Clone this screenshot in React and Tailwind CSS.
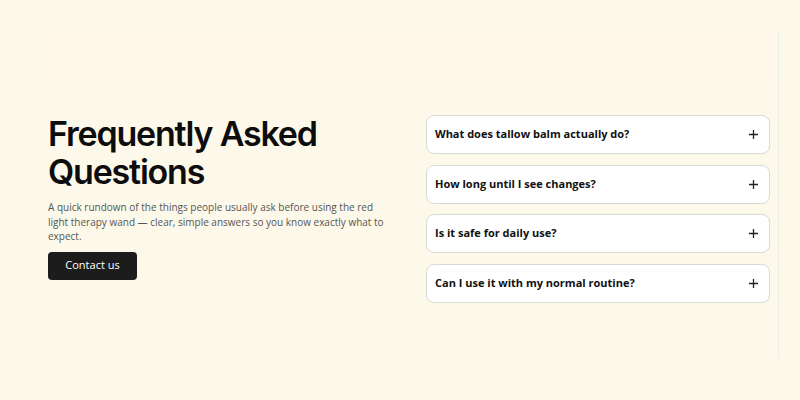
import React from "react";

const faqs = [
  "What does tallow balm actually do?",
  "How long until I see changes?",
  "Is it safe for daily use?",
  "Can I use it with my normal routine?",
];

function Plus() {
  return (
    <svg width="11" height="11" viewBox="0 0 11 11" className="shrink-0">
      <path d="M5.5 1v9M1 5.5h9" stroke="#222" strokeWidth="1.3" />
    </svg>
  );
}

export default function App() {
  return (
    <div className="w-[800px] h-[400px] bg-[#fdf9ea] pt-[31px] overflow-hidden">
      <div className="ml-[41px] w-[738px] h-[327px] border-r border-[#eeeee6] flex flex-col">
        <div className="h-[50px] bg-[#fff8eb]" />
        <div className="flex">
          <div className="w-[385px] pl-[7px] pt-[34px]">
            <h1
              className="text-[34px] leading-[38px] font-semibold text-[#0d0d0d] tracking-[-1.2px]"
              style={{ fontFamily: "Inter, sans-serif" }}
            >
              Frequently Asked
              <br />
              Questions
            </h1>
            <p
              className="mt-[9px] text-[10px] leading-[14.5px] text-[#555] w-[345px]"
              style={{ fontFamily: "'Open Sans', sans-serif" }}
            >
              A quick rundown of the things people usually ask before using the red
              <br />
              light therapy wand — clear, simple answers so you know exactly what to
              <br />
              expect.
            </p>
            <button
              className="mt-[8px] w-[89px] h-[28px] rounded-[4px] bg-[#1c1c1c] text-white text-[11px] font-medium"
              style={{ fontFamily: "'Open Sans', sans-serif" }}
            >
              Contact us
            </button>
          </div>
          <div className="w-[344px] pt-[34px] flex flex-col gap-[10.5px]">
            {faqs.map((q) => (
              <div
                key={q}
                className="h-[39px] bg-white border border-[#d9d9d6] rounded-[8px] flex items-center justify-between pl-[8px] pr-[10px]"
              >
                <span
                  className="text-[11px] font-bold text-[#111]"
                  style={{ fontFamily: "'Open Sans', sans-serif" }}
                >
                  {q}
                </span>
                <Plus />
              </div>
            ))}
          </div>
        </div>
      </div>
    </div>
  );
}
